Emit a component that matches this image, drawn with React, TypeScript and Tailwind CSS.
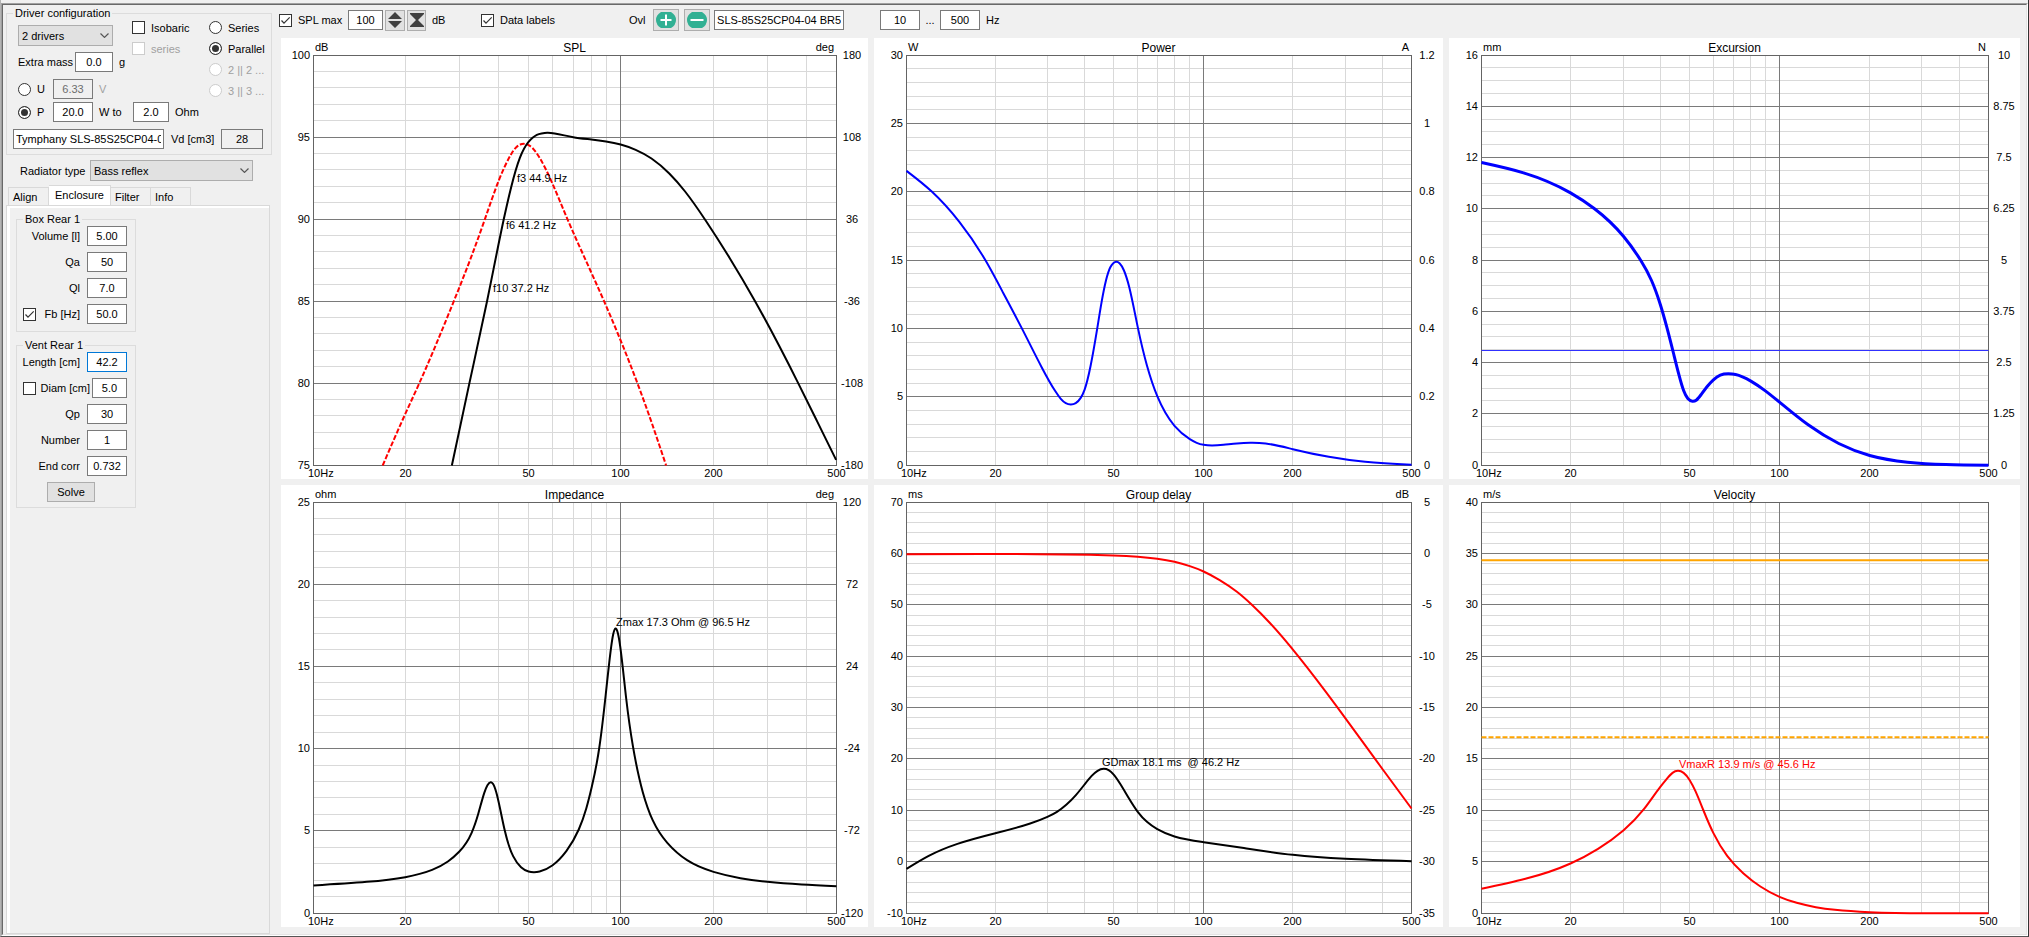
import { useLayoutEffect, useRef, useState } from "react";
import type { ReactNode } from "react";

type Point = [number, number];

interface Trace {
  color: string;
  width: number;
  dash?: string;
  points: Point[];
}

interface Note {
  text: string;
  x: number;
  y: number;
  color?: string;
}

interface ChartSpec {
  title: string;
  leftUnit: string;
  rightUnit?: string;
  left: string[];
  right?: string[];
  minor: number;
  // Corners of the coordinate space in which traces and notes are given.
  frame: [number, number, number, number];
  traces: Trace[];
  notes?: Note[];
}

const FRAME_SPL: [number, number, number, number] = [85, 75, 1408, 1305];
const FRAME_POWER: [number, number, number, number] = [122, 75, 1441, 1305];
const FRAME_EXCURSION: [number, number, number, number] = [135, 75, 1462, 1305];
const FRAME_IMPEDANCE: [number, number, number, number] = [85, 127, 1408, 1360];
const FRAME_DELAY: [number, number, number, number] = [122, 127, 1441, 1360];
const FRAME_VELOCITY: [number, number, number, number] = [135, 127, 1462, 1360];

const charts: ChartSpec[] = [
  {
    title: "SPL",
    leftUnit: "dB",
    rightUnit: "deg",
    left: ["100", "95", "90", "85", "80", "75"],
    right: ["180", "108", "36", "-36", "-108", "-180"],
    minor: 5,
    frame: FRAME_SPL,
    traces: [
      {
        color: "#ff0000",
        width: 2,
        dash: "5 2",
        points: [
          [260, 1305], [318, 1148], [352, 1060], [385, 970], [440, 812], [485, 676], [518, 568], [553, 452],
          [570, 405], [585, 371], [598, 350], [608, 342], [617, 340], [628, 343], [640, 354], [655, 378],
          [689, 458], [726, 562], [777, 698], [820, 812], [862, 930], [905, 1060], [940, 1175], [977, 1305],
        ],
      },
      {
        color: "#000000",
        width: 2,
        points: [
          [435, 1305], [479, 1060], [524, 812], [566, 568], [585, 470], [607, 382], [629, 334], [640, 321],
          [650, 313], [662, 309], [676, 307], [695, 309], [742, 320], [788, 327], [825, 333], [862, 342],
          [900, 358], [940, 384], [985, 429], [1025, 483], [1077, 570], [1138, 683], [1202, 812],
          [1312, 1060], [1360, 1175], [1407, 1288],
        ],
      },
    ],
    notes: [
      { text: "f3 44.9 Hz", x: 599, y: 443 },
      { text: "f6 41.2 Hz", x: 571, y: 584 },
      { text: "f10 37.2 Hz", x: 539, y: 773 },
    ],
  },
  {
    title: "Power",
    leftUnit: "W",
    rightUnit: "A",
    left: ["30", "25", "20", "15", "10", "5", "0"],
    right: ["1.2", "1", "0.8", "0.6", "0.4", "0.2", "0"],
    minor: 5,
    frame: FRAME_POWER,
    traces: [
      {
        color: "#0000ff",
        width: 2,
        points: [
          [122, 421], [188, 483], [260, 574], [329, 691], [375, 788], [424, 895], [475, 1010], [510, 1081],
          [525, 1105], [538, 1118], [551, 1122], [564, 1118], [577, 1102], [587, 1078], [603, 1005],
          [620, 895], [632, 812], [643, 750], [654, 711], [662, 698], [670, 694], [679, 699], [690, 720],
          [704, 771], [726, 890], [750, 1005], [777, 1097], [822, 1186], [862, 1226], [880, 1237],
          [898, 1243], [920, 1245], [950, 1243], [985, 1239], [1020, 1237], [1060, 1239], [1131, 1256],
          [1225, 1279], [1320, 1294], [1441, 1303],
        ],
      },
    ],
  },
  {
    title: "Excursion",
    leftUnit: "mm",
    rightUnit: "N",
    left: ["16", "14", "12", "10", "8", "6", "4", "2", "0"],
    right: ["10", "8.75", "7.5", "6.25", "5", "3.75", "2.5", "1.25", "0"],
    minor: 4,
    frame: FRAME_EXCURSION,
    traces: [
      { color: "#3030ff", width: 1, points: [[135, 960], [1462, 960]] },
      {
        color: "#0000ff",
        width: 3,
        points: [
          [135, 396], [245, 427], [368, 487], [430, 534], [507, 618], [552, 690], [580, 750], [603, 822],
          [620, 890], [637, 966], [652, 1034], [664, 1080], [675, 1104], [687, 1112], [697, 1109],
          [710, 1092], [728, 1065], [742, 1048], [760, 1034], [781, 1030], [800, 1032], [840, 1052],
          [878, 1081], [915, 1115], [990, 1183], [1070, 1239], [1151, 1275], [1250, 1295], [1350, 1302],
          [1462, 1304],
        ],
      },
    ],
  },
  {
    title: "Impedance",
    leftUnit: "ohm",
    rightUnit: "deg",
    left: ["25", "20", "15", "10", "5", "0"],
    right: ["120", "72", "24", "-24", "-72", "-120"],
    minor: 5,
    frame: FRAME_IMPEDANCE,
    traces: [
      {
        color: "#000000",
        width: 2,
        points: [
          [85, 1276], [220, 1265], [317, 1251], [385, 1229], [425, 1204], [454, 1174], [485, 1118],
          [502, 1060], [517, 998], [525, 975], [533, 966], [541, 975], [549, 1004], [569, 1112],
          [590, 1188], [610, 1221], [629, 1234], [643, 1236], [657, 1234], [689, 1216], [725, 1172],
          [756, 1108], [775, 1045], [789, 980], [808, 862], [824, 706], [838, 560], [843, 523], [849, 505],
          [855, 519], [861, 560], [876, 715], [893, 858], [918, 996], [943, 1080], [980, 1148],
          [1030, 1200], [1097, 1235], [1165, 1254], [1233, 1265], [1320, 1273], [1408, 1278],
        ],
      },
    ],
    notes: [{ text: "Zmax 17.3 Ohm @ 96.5 Hz", x: 849, y: 486 }],
  },
  {
    title: "Group delay",
    leftUnit: "ms",
    rightUnit: "dB",
    left: ["70", "60", "50", "40", "30", "20", "10", "0", "-10"],
    right: ["5", "0", "-5", "-10", "-15", "-20", "-25", "-30", "-35"],
    minor: 5,
    frame: FRAME_DELAY,
    traces: [
      {
        color: "#ff0000",
        width: 2,
        points: [
          [122, 282], [463, 282], [600, 284], [662, 286], [726, 290], [777, 296], [822, 305], [862, 318],
          [898, 334], [940, 360], [985, 395], [1024, 434], [1070, 487], [1145, 588], [1247, 741],
          [1366, 928], [1441, 1045],
        ],
      },
      {
        color: "#000000",
        width: 2,
        points: [
          [122, 1226], [180, 1187], [255, 1151], [354, 1119], [445, 1090], [490, 1070], [515, 1055],
          [540, 1033], [565, 1004], [587, 973], [605, 948], [621, 932], [637, 926], [650, 930], [662, 942],
          [680, 971], [700, 1009], [726, 1055], [750, 1085], [777, 1107], [822, 1129], [898, 1146],
          [1010, 1165], [1131, 1184], [1268, 1196], [1441, 1203],
        ],
      },
    ],
    notes: [{ text: "GDmax 18.1 ms\u00a0 @ 46.2 Hz", x: 633, y: 906 }],
  },
  {
    title: "Velocity",
    leftUnit: "m/s",
    left: ["40", "35", "30", "25", "20", "15", "10", "5", "0"],
    minor: 5,
    frame: FRAME_VELOCITY,
    traces: [
      { color: "#ffa500", width: 2, points: [[135, 300], [1462, 300]] },
      { color: "#ffa500", width: 2, dash: "5 2", points: [[135, 831], [1462, 831]] },
      {
        color: "#ff0000",
        width: 2,
        points: [
          [135, 1286], [250, 1256], [368, 1210], [440, 1166], [507, 1110], [560, 1047], [603, 980],
          [620, 956], [635, 938], [649, 932], [664, 938], [680, 960], [695, 993], [716, 1051], [742, 1119],
          [778, 1187], [820, 1239], [865, 1279], [915, 1310], [960, 1328], [1010, 1341], [1060, 1349],
          [1151, 1356], [1300, 1359], [1462, 1359],
        ],
      },
    ],
    notes: [{ text: "VmaxR 13.9 m/s @ 45.6 Hz", x: 651, y: 912, color: "#ff0000" }],
  },
];

const DECADE_LINES = [20, 30, 40, 50, 60, 70, 80, 90, 200, 300, 400];
const FREQUENCY_LABELS = [20, 50, 100, 200, 500];
const MARGIN = { left: 32, right: 32, top: 17, bottom: 14 };

// Slopes at the knots of the natural cubic spline (tridiagonal solve).
function splineSlopes(points: Point[]): number[] {
  const n = points.length;
  const c = new Array<number>(n).fill(0);
  const d = new Array<number>(n).fill(0);
  for (let i = 0; i < n; i++) {
    const left = i > 0 ? 1 / (points[i][0] - points[i - 1][0]) : 0;
    const right = i < n - 1 ? 1 / (points[i + 1][0] - points[i][0]) : 0;
    const riseLeft = i > 0 ? points[i][1] - points[i - 1][1] : 0;
    const riseRight = i < n - 1 ? points[i + 1][1] - points[i][1] : 0;
    const rhs = 3 * (riseLeft * left * left + riseRight * right * right);
    const pivot = 2 * (left + right) - (i > 0 ? left * c[i - 1] : 0);
    c[i] = right / pivot;
    d[i] = (rhs - (i > 0 ? left * d[i - 1] : 0)) / pivot;
  }
  for (let i = n - 2; i >= 0; i--) d[i] -= c[i] * d[i + 1];
  return d;
}

function smoothPath(points: Point[]): string {
  const slopes = splineSlopes(points);
  let d = `M${points[0][0]} ${points[0][1]}`;
  for (let i = 0; i < points.length - 1; i++) {
    const [ax, ay] = points[i];
    const [bx, by] = points[i + 1];
    const third = (bx - ax) / 3;
    d += `C${ax + third} ${ay + slopes[i] * third} ${bx - third} ${by - slopes[i + 1] * third} ${bx} ${by}`;
  }
  return d;
}

function Chart({ spec }: { spec: ChartSpec }) {
  const box = useRef<HTMLDivElement>(null);
  const [size, setSize] = useState({ width: 580, height: 441 });

  useLayoutEffect(() => {
    const node = box.current;
    if (!node) return;
    const measure = () => setSize({ width: Math.round(node.clientWidth), height: Math.round(node.clientHeight) });
    measure();
    const observer = new ResizeObserver(measure);
    observer.observe(node);
    return () => observer.disconnect();
  }, []);

  const x0 = MARGIN.left;
  const x1 = size.width - MARGIN.right;
  const y0 = MARGIN.top;
  const y1 = size.height - MARGIN.bottom;
  const [fx0, fy0, fx1, fy1] = spec.frame;
  const px = (x: number) => x0 + 0.5 + ((x - fx0) / (fx1 - fx0)) * (x1 - x0);
  const py = (y: number) => y0 + 0.5 + ((y - fy0) / (fy1 - fy0)) * (y1 - y0);
  const hz = (f: number) => Math.floor(x0 + (Math.log(f / 10) / Math.log(50)) * (x1 - x0)) + 0.5;
  const steps = spec.left.length - 1;
  const minorCount = steps * spec.minor;
  const row = (i: number) => Math.floor(y0 + (i * (y1 - y0)) / minorCount) + 0.5;
  const major = (i: number) => row(i * spec.minor);
  const minorRows = Array.from({ length: minorCount }, (_, i) => i).filter((i) => i % spec.minor !== 0);

  return (
    <div ref={box} className="min-h-[240px] min-w-0 overflow-hidden bg-white">
      <svg
        width={size.width}
        height={size.height}
        className="block text-[11px]"
        fill="#000"
        role="img"
        aria-label={spec.title}
      >
        <g stroke="#d9d9d9">
          {DECADE_LINES.map((f) => (
            <line key={f} x1={hz(f)} x2={hz(f)} y1={y0} y2={y1} />
          ))}
          {minorRows.map((i) => (
            <line key={i} x1={x0} x2={x1} y1={row(i)} y2={row(i)} />
          ))}
        </g>
        <g stroke="#7a7a7a">
          <line x1={hz(100)} x2={hz(100)} y1={y0} y2={y1} />
          {spec.left.slice(1, -1).map((label, i) => (
            <line key={label} x1={x0} x2={x1} y1={major(i + 1)} y2={major(i + 1)} />
          ))}
        </g>
        <rect x={x0 + 0.5} y={y0 + 0.5} width={x1 - x0} height={y1 - y0} fill="none" stroke="#646464" />
        {spec.traces.map((trace, i) => (
          <path
            key={i}
            d={smoothPath(trace.points.map(([x, y]): Point => [px(x), py(y)]))}
            fill="none"
            stroke={trace.color}
            strokeWidth={trace.width}
            strokeDasharray={trace.dash}
          />
        ))}
        <text x={(x0 + x1) / 2} y={14} textAnchor="middle" className="text-[12px]">
          {spec.title}
        </text>
        <text x={x0 + 2} y={13}>
          {spec.leftUnit}
        </text>
        {spec.rightUnit && (
          <text x={x1 - 2} y={13} textAnchor="end">
            {spec.rightUnit}
          </text>
        )}
        {spec.left.map((label, i) => (
          <text key={label} x={x0 - 3} y={major(i) + 3.5} textAnchor="end">
            {label}
          </text>
        ))}
        {spec.right?.map((label, i) => (
          <text key={label} x={x1 + 16} y={major(i) + 3.5} textAnchor="middle">
            {label}
          </text>
        ))}
        <text x={x0 - 5} y={y1 + 12}>
          10Hz
        </text>
        {FREQUENCY_LABELS.map((f) => (
          <text key={f} x={hz(f)} y={y1 + 12} textAnchor="middle">
            {f}
          </text>
        ))}
        {spec.notes?.map((note) => (
          <text key={note.text} x={Math.round(px(note.x))} y={Math.round(py(note.y)) + 4} fill={note.color}>
            {note.text}
          </text>
        ))}
      </svg>
    </div>
  );
}

function Check({
  label,
  hint,
  checked,
  disabled,
}: {
  label?: string;
  hint?: string;
  checked?: boolean;
  disabled?: boolean;
}) {
  return (
    <label className={"flex h-[15px] items-center gap-[6px] whitespace-nowrap " + (disabled ? "text-[#a0a0a0]" : "")}>
      <span className="relative flex size-[13px] shrink-0">
        <input
          type="checkbox"
          aria-label={hint}
          defaultChecked={checked}
          disabled={disabled}
          className="peer size-[13px] appearance-none border border-[#333333] bg-white disabled:border-[#cccccc]"
        />
        <svg
          viewBox="0 0 13 13"
          className="pointer-events-none absolute inset-0 hidden size-[13px] peer-checked:block"
          fill="none"
          stroke="#333"
          strokeWidth="1.2"
        >
          <path d="M2.5 6.5 5 9.2 10.7 3.3" />
        </svg>
      </span>
      {label && <span>{label}</span>}
    </label>
  );
}

function Radio({
  label,
  name,
  checked,
  disabled,
}: {
  label: string;
  name: string;
  checked?: boolean;
  disabled?: boolean;
}) {
  return (
    <label className={"flex h-[15px] items-center gap-[6px] whitespace-nowrap " + (disabled ? "text-[#a0a0a0]" : "")}>
      <input
        type="radio"
        name={name}
        defaultChecked={checked}
        disabled={disabled}
        className="size-[13px] shrink-0 appearance-none rounded-full border border-[#333333] bg-white checked:bg-[#333333] checked:shadow-[inset_0_0_0_2px_white] disabled:border-[#cccccc]"
      />
      <span>{label}</span>
    </label>
  );
}

function Field({
  id,
  value,
  size = "w-[40px]",
  align = "text-center",
  tone = "border-[#7a7a7a] bg-white",
  label,
  disabled,
  readOnly,
}: {
  id?: string;
  value: string;
  size?: string;
  align?: string;
  tone?: string;
  label?: string;
  disabled?: boolean;
  readOnly?: boolean;
}) {
  return (
    <input
      id={id}
      type="text"
      aria-label={label}
      defaultValue={value}
      disabled={disabled}
      readOnly={readOnly}
      className={
        "h-[20px] shrink-0 border px-[2px] outline-none disabled:text-[#6d6d6d] " + size + " " + align + " " + tone
      }
    />
  );
}

function Combo({ id, label, value, size }: { id: string; label?: string; value: string; size: string }) {
  return (
    <span className={"relative flex h-[21px] shrink-0 " + size}>
      <select
        id={id}
        aria-label={label}
        defaultValue={value}
        className="w-full appearance-none border border-[#adadad] bg-[#e1e1e1] pl-[3px]"
      >
        <option>{value}</option>
      </select>
      <svg
        viewBox="0 0 9 5"
        className="pointer-events-none absolute top-[8px] right-[4px] h-[5px] w-[9px]"
        fill="none"
        stroke="#555"
        strokeWidth="1.2"
      >
        <path d="M.5.5 4.5 4.4 8.5.5" />
      </svg>
    </span>
  );
}

function Group({ title, className, children }: { title: string; className: string; children: ReactNode }) {
  return (
    <fieldset className={"min-w-0 border border-[#dcdcdc] " + className}>
      <legend className="ml-[6px] h-[14px] px-[2px]">{title}</legend>
      {children}
    </fieldset>
  );
}

function ParamRow({ id, label, value, active }: { id: string; label: string; value: string; active?: boolean }) {
  return (
    <div className="flex items-center justify-end gap-[7px]">
      <label htmlFor={id}>{label}</label>
      <Field id={id} value={value} tone={active ? "border-[#0078d7] bg-white" : "border-[#7a7a7a] bg-white"} />
    </div>
  );
}

function Sidebar() {
  const tabs = [
    { name: "Align", size: "w-[41px]" },
    { name: "Enclosure", size: "w-[62px]", active: true },
    { name: "Filter", size: "w-[40px]" },
    { name: "Info", size: "w-[40px]" },
  ];
  return (
    <aside className="ml-[3px] flex w-[266px] shrink-0 flex-col pt-[1px]">
      <Group title="Driver configuration" className="h-[149px]">
        <div className="flex pl-[11px]">
          <div className="w-[191px]">
            <div className="flex">
              <div className="flex w-[114px] flex-col gap-[6px] pt-[5px]">
                <Combo id="drivers" label="Drivers" value="2 drivers" size="w-[95px]" />
                <div className="flex items-center gap-[6px] whitespace-nowrap">
                  <label htmlFor="mass" className="w-[51px]">
                    Extra mass
                  </label>
                  <Field id="mass" value="0.0" size="w-[38px]" />
                  <span>g</span>
                </div>
              </div>
              <div className="flex flex-col gap-[6px]">
                <Check label="Isobaric" />
                <Check label="series" disabled />
              </div>
            </div>
            <div className="mt-[7px] flex items-center gap-[6px]">
              <span className="w-[29px]">
                <Radio name="drive" label="U" />
              </span>
              <Field label="Voltage" value="6.33" tone="border-[#7a7a7a] bg-[#f0f0f0]" disabled />
              <span className="text-[#a0a0a0]">V</span>
            </div>
            <div className="mt-[3px] flex items-center gap-[6px]">
              <span className="w-[29px]">
                <Radio name="drive" label="P" checked />
              </span>
              <Field label="Power" value="20.0" />
              <label htmlFor="load" className="w-[28px] whitespace-nowrap">
                W to
              </label>
              <Field id="load" value="2.0" size="w-[36px]" />
              <span>Ohm</span>
            </div>
          </div>
          <div className="flex flex-col gap-[6px]">
            <Radio name="wiring" label="Series" />
            <Radio name="wiring" label="Parallel" checked />
            <Radio name="wiring" label="2 || 2 ..." disabled />
            <Radio name="wiring" label="3 || 3 ..." disabled />
          </div>
        </div>
        <div className="mt-[7px] flex items-center gap-[7px] pl-[6px]">
          <Field label="Driver model" value="Tymphany SLS-85S25CP04-04" size="w-[151px]" align="text-left" />
          <label htmlFor="vd" className="w-[43px] whitespace-nowrap">
            Vd [cm3]
          </label>
          <Field id="vd" value="28" size="w-[42px]" tone="border-[#7a7a7a] bg-[#f0f0f0]" readOnly />
        </div>
      </Group>

      <div className="mt-[5px] flex items-center gap-[7px] pl-[14px]">
        <label htmlFor="radiator" className="w-[63px] whitespace-nowrap">
          Radiator type
        </label>
        <Combo id="radiator" value="Bass reflex" size="w-[163px]" />
      </div>

      <div className="mt-[4px] flex items-end pl-[2px]" role="tablist">
        {tabs.map((tab) => (
          <button
            key={tab.name}
            type="button"
            role="tab"
            aria-selected={!!tab.active}
            className={
              "border-t border-r border-[#d9d9d9] first:border-l " +
              tab.size +
              (tab.active ? " h-[20px] bg-white pb-[2px]" : " h-[18px] pl-[4px] text-left")
            }
          >
            {tab.name}
          </button>
        ))}
      </div>
      <div
        className="mr-[2px] flex grow flex-col items-start border border-[#d9d9d9] pt-[6px] pl-[9px] shadow-[inset_2px_1px_0_1px_white]"
        role="tabpanel"
      >
        <Group title="Box Rear 1" className="h-[120px] w-[120px] pr-[8px]">
          <div className="flex flex-col gap-[6px]">
            <ParamRow id="volume" label="Volume [l]" value="5.00" />
            <ParamRow id="qa" label="Qa" value="50" />
            <ParamRow id="ql" label="Ql" value="7.0" />
            <div className="flex items-center justify-between pl-[6px]">
              <Check hint="Tune by box frequency" checked />
              <ParamRow id="fb" label="Fb [Hz]" value="50.0" />
            </div>
          </div>
        </Group>
        <Group title="Vent Rear 1" className="mt-[6px] h-[170px] w-[120px] pr-[8px]">
          <div className="flex flex-col gap-[6px]">
            <ParamRow id="length" label="Length [cm]" value="42.2" active />
            <div className="flex items-center justify-between pl-[6px]">
              <Check hint="Tune by vent diameter" />
              <div className="flex items-center gap-[2px] whitespace-nowrap">
                <label htmlFor="diam">Diam [cm]</label>
                <Field id="diam" value="5.0" size="w-[35px]" />
              </div>
            </div>
            <ParamRow id="qp" label="Qp" value="30" />
            <ParamRow id="number" label="Number" value="1" />
            <ParamRow id="endcorr" label="End corr" value="0.732" />
            <button type="button" className="ml-[30px] h-[20px] w-[48px] border border-[#adadad] bg-[#e1e1e1]">
              Solve
            </button>
          </div>
        </Group>
      </div>
    </aside>
  );
}

function IconButton({ label, size, children }: { label: string; size: string; children: ReactNode }) {
  return (
    <button
      type="button"
      aria-label={label}
      className={"flex shrink-0 items-center justify-center border border-[#adadad] bg-[#e1e1e1] " + size}
    >
      {children}
    </button>
  );
}

function Toolbar() {
  return (
    <div className="flex h-[33px] shrink-0 items-center pb-[3px] pl-[7px]">
      <span className="w-[69px]">
        <Check label="SPL max" checked />
      </span>
      <Field label="SPL maximum" value="100" size="w-[35px]" />
      <div className="ml-[2px] flex gap-[2px]">
        <IconButton label="Expand range" size="h-[21px] w-[20px]">
          <svg width="14" height="16" viewBox="0 0 14 16" fill="#404040">
            <path d="M7 0 14 7H0zM7 16 0 9H14z" />
          </svg>
        </IconButton>
        <IconButton label="Compress range" size="h-[21px] w-[19px]">
          <svg width="14" height="14" viewBox="0 0 14 14" fill="#404040">
            <path d="M0 0H14V1L8 7 14 13V14H0V13L6 7 0 1z" />
          </svg>
        </IconButton>
      </div>
      <span className="ml-[6px] w-[49px]">dB</span>
      <Check label="Data labels" checked />
      <span className="ml-[74px] w-[24px]">Ovl</span>
      <div className="flex gap-[5px]">
        <IconButton label="Add overlay" size="h-[22px] w-[26px]">
          <svg width="20" height="16" viewBox="0 0 20 16">
            <path d="M5 0H15Q20 3 20 8T15 16H5Q0 13 0 8T5 0z" fill="#31b093" />
            <path d="M10 2.5V13.5M4.5 8H15.5" stroke="#fff" strokeWidth="2" />
          </svg>
        </IconButton>
        <IconButton label="Remove overlay" size="h-[22px] w-[26px]">
          <svg width="20" height="16" viewBox="0 0 20 16">
            <path d="M5 0H15Q20 3 20 8T15 16H5Q0 13 0 8T5 0z" fill="#31b093" />
            <path d="M3.5 8H16.5" stroke="#fff" strokeWidth="2" />
          </svg>
        </IconButton>
      </div>
      <span className="ml-[4px] flex">
        <Field label="Overlay name" value="SLS-85S25CP04-04 BR5.00 50.0" size="w-[130px]" align="text-left" />
      </span>
      <span className="ml-[36px] flex items-center">
        <Field label="Lowest frequency" value="10" />
        <span className="w-[20px] text-center">...</span>
        <Field label="Highest frequency" value="500" />
        <span className="ml-[6px]">Hz</span>
      </span>
    </div>
  );
}

export default function App() {
  return (
    <div className="flex min-h-screen flex-col border-r border-b border-l border-r-[#333333] border-b-[#555555] border-l-[#b4b4b4] bg-[#f0f0f0] pt-[3px] font-['Liberation_Sans',Arial,sans-serif] text-[11px] leading-[14px] text-black">
      <div className="flex grow flex-col border border-t-[#a0a0a0] border-r-white border-b-white border-l-[#a0a0a0]">
        <div className="flex grow border border-t-[#696969] border-r-[#e3e3e3] border-b-[#e3e3e3] border-l-[#696969]">
          <Sidebar />
          <main className="flex min-w-0 grow flex-col pr-[6px] pb-[7px]">
            <Toolbar />
            <div className="ml-[9px] grid grow grid-cols-[587fr_569fr_571fr] grid-rows-[441fr_442fr] gap-[6px]">
              {charts.map((spec) => (
                <Chart key={spec.title} spec={spec} />
              ))}
            </div>
          </main>
        </div>
      </div>
    </div>
  );
}
